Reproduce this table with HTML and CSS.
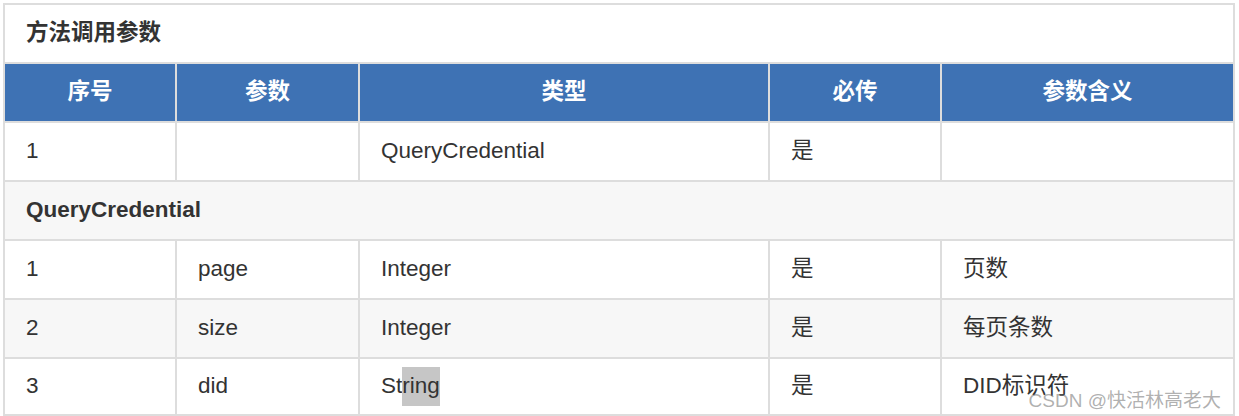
FILE: index.html
```html
<!DOCTYPE html>
<html lang="zh">
<head>
<meta charset="utf-8">
<title>方法调用参数</title>
<link rel="stylesheet" href="styles.css">
</head>
<body>
<div class="wrap">
  <table class="params">
    <colgroup>
      <col class="c1"><col class="c2"><col class="c3"><col class="c4"><col class="c5">
    </colgroup>
    <tr class="title"><td colspan="5">方法调用参数</td></tr>
    <tr class="head"><th>序号</th><th>参数</th><th>类型</th><th>必传</th><th>参数含义</th></tr>
    <tr class="row"><td>1</td><td></td><td>QueryCredential</td><td>是</td><td></td></tr>
    <tr class="row alt group"><td colspan="5">QueryCredential</td></tr>
    <tr class="row"><td>1</td><td>page</td><td>Integer</td><td>是</td><td>页数</td></tr>
    <tr class="row alt"><td>2</td><td>size</td><td>Integer</td><td>是</td><td>每页条数</td></tr>
    <tr class="row last"><td>3</td><td>did</td><td>St<span class="sel">ring</span></td><td>是</td><td>DID标识符</td></tr>
  </table>
  <div class="watermark">CSDN @快活林高老大</div>
</div>
</body>
</html>
```

FILE: styles.css
```css
html, body {
  margin: 0;
  padding: 0;
  background: #ffffff;
}
body {
  padding: 3px 0 0 3px;
  font-family: "Liberation Sans", "Noto Sans CJK SC", sans-serif;
  color: #333333;
}
.wrap {
  position: relative;
  width: 1232px;
}
.params {
  border-collapse: collapse;
  table-layout: fixed;
  width: 1230px;
  font-size: 22.5px;
}
.c1 { width: 172px; }
.c2 { width: 183px; }
.c3 { width: 410px; }
.c4 { width: 172px; }
.c5 { width: 293px; }
.params td, .params th {
  border: 2px solid #dddddd;
  height: 57px;
  padding: 0 21px;
  vertical-align: middle;
  text-align: left;
  line-height: 1;
}
.title td {
  background: #ffffff;
  font-weight: bold;
  color: #333333;
}
.head th {
  background: #3e72b4;
  color: #ffffff;
  font-weight: bold;
  text-align: center;
}
.row td { background: #ffffff; }
.row.alt td { background: #f7f7f7; }
.group td { font-weight: bold; }
.last td { height: 55px; }
.sel {
  background: #c6c6c6;
  display: inline-block;
  padding: 8px 0;
}
.watermark {
  position: absolute;
  right: 14px;
  bottom: 4px;
  font-size: 19px;
  color: rgba(110, 110, 110, 0.55);
  font-family: "Liberation Sans", "Noto Sans CJK SC", sans-serif;
  white-space: nowrap;
}
```
